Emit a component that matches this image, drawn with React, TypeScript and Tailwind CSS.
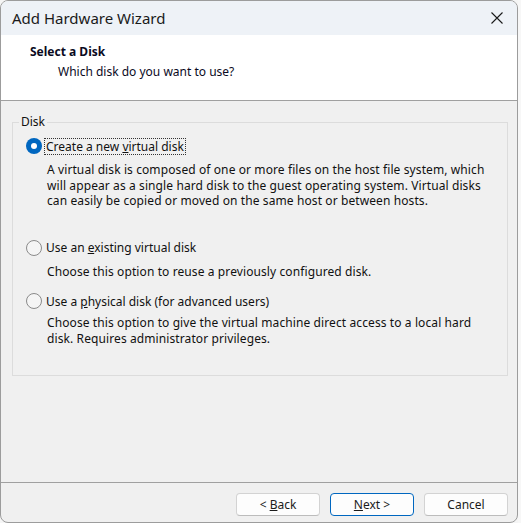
import React from "react";

const font = { fontFamily: '"Noto Sans", "Liberation Sans", sans-serif' };

function Radio({ checked }: { checked?: boolean }) {
  if (checked) {
    return (
      <span className="w-[16px] h-[16px] rounded-full bg-[#0067c0] flex items-center justify-center shrink-0">
        <span className="w-[6px] h-[6px] rounded-full bg-white" />
      </span>
    );
  }
  return <span className="w-[16px] h-[16px] rounded-full border border-[#8a8a8a] bg-[#f5f5f5] shrink-0" />;
}

function Btn({ children, primary }: { children: React.ReactNode; primary?: boolean }) {
  return (
    <button
      className={
        primary
          ? "w-[84px] h-[23px] rounded-[4px] border border-[#0067c0] bg-[#fdfdfd] text-[12px] text-[#1b1b1b] flex items-center justify-center"
          : "w-[84px] h-[23px] rounded-[4px] border border-[#d3d3d3] border-b-[#bcbcbc] bg-[#fdfdfd] text-[12px] text-[#1b1b1b] flex items-center justify-center"
      }
    >
      <span>{children}</span>
    </button>
  );
}

export default function App() {
  return (
    <div className="w-[521px] h-[523px] bg-[#f5f5f5] flex" style={font}>
      <div className="w-[518px] h-[523px] border border-[#9c9c9c] rounded-[8px] overflow-hidden flex flex-col bg-[#f0f0f0] shrink-0">
        <div className="h-[34px] bg-[#eef2f7] flex items-center justify-between pl-[11px] pr-[14px] shrink-0">
          <span className="text-[15px] text-[#1a1a1a]">Add Hardware Wizard</span>
          <svg width="12" height="12" viewBox="0 0 12 12">
            <path d="M0.5 0.5 L11.5 11.5 M11.5 0.5 L0.5 11.5" stroke="#1a1a1a" strokeWidth="1.1" />
          </svg>
        </div>
        <div className="h-[66px] bg-white border-b border-[#a0a0a0] shrink-0 pt-[9px]">
          <div className="pl-[29px] text-[12px] leading-[16px] font-bold text-[#0a0a1e]">Select a Disk</div>
          <div className="pl-[57px] mt-[4px] text-[12px] leading-[16px] text-[#0a0a1e]">Which disk do you want to use?</div>
        </div>
        <div className="h-[381px] shrink-0 pt-[21px] pl-[11px]">
          <div className="relative w-[496px] h-[254px] border border-[#dcdcdc] text-[12px] text-[#111]">
            <span className="absolute left-[6px] top-[-9px] px-[2px] bg-[#f0f0f0] leading-[16px]">Disk</span>
            <div className="pl-[13px] pt-[14px]">
              <div className="flex items-center h-[18px] gap-[2px]">
                <Radio checked />
                <span className="border border-dotted border-[#333] leading-[15px] px-[1px]">
                  Create a new <u>v</u>irtual disk
                </span>
              </div>
              <div className="ml-[21px] mt-[7px] leading-[15.5px] tracking-[0.1px] whitespace-nowrap">
                A virtual disk is composed of one or more files on the host file system, which
                <br />
                will appear as a single hard disk to the guest operating system. Virtual disks
                <br />
                can easily be copied or moved on the same host or between hosts.
              </div>
              <div className="flex items-center h-[18px] gap-[2px] mt-[30px]">
                <Radio />
                <span className="px-[2px] leading-[15px]">
                  Use an <u>e</u>xisting virtual disk
                </span>
              </div>
              <div className="ml-[21px] mt-[7px] leading-[15.5px] tracking-[0.1px]">
                Choose this option to reuse a previously configured disk.
              </div>
              <div className="flex items-center h-[18px] gap-[2px] mt-[13px]">
                <Radio />
                <span className="px-[2px] leading-[15px]">
                  Use a <u>p</u>hysical disk (for advanced users)
                </span>
              </div>
              <div className="ml-[21px] mt-[5px] leading-[15.5px] tracking-[0.1px] whitespace-nowrap">
                Choose this option to give the virtual machine direct access to a local hard
                <br />
                disk. Requires administrator privileges.
              </div>
            </div>
          </div>
        </div>
        <div className="flex-1 border-t border-[#a0a0a0] flex justify-end items-start gap-[10px] pt-[10px] pr-[9px]">
          <Btn>
            &lt; <u>B</u>ack
          </Btn>
          <Btn primary>
            <u>N</u>ext &gt;
          </Btn>
          <Btn>Cancel</Btn>
        </div>
      </div>
      <div className="flex-1 bg-[#f7f7f7]" />
    </div>
  );
}
